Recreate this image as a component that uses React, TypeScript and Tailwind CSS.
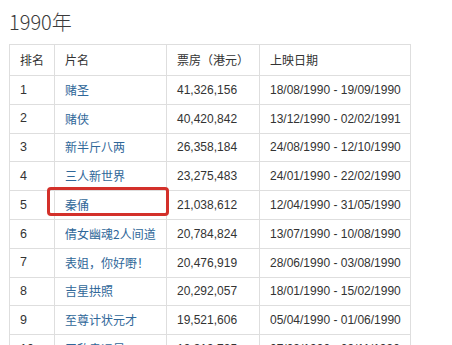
import React from "react";

const rows = [
  ["1", "赌圣", "41,326,156", "18/08/1990 - 19/09/1990"],
  ["2", "赌侠", "40,420,842", "13/12/1990 - 02/02/1991"],
  ["3", "新半斤八两", "26,358,184", "24/08/1990 - 12/10/1990"],
  ["4", "三人新世界", "23,275,483", "24/01/1990 - 22/02/1990"],
  ["5", "秦俑", "21,038,612", "12/04/1990 - 31/05/1990"],
  ["6", "倩女幽魂2人间道", "20,784,824", "13/07/1990 - 10/08/1990"],
  ["7", "表姐，你好嘢！", "20,476,919", "28/06/1990 - 03/08/1990"],
  ["8", "吉星拱照", "20,292,057", "18/01/1990 - 15/02/1990"],
  ["9", "至尊计状元才", "19,521,606", "05/04/1990 - 01/06/1990"],
  ["10", "无敌幸运星", "19,319,795", "07/09/1990 - 09/11/1990"],
];

const cjk = "font-['Noto_Sans_CJK_SC','Noto_Sans',sans-serif]";
const num = "font-['Liberation_Sans','Noto_Sans_CJK_SC',sans-serif]";

export default function App() {
  return (
    <div className="w-[452px] h-[345px] overflow-hidden bg-white relative">
      <div className={`pl-[9px] pt-[8px] h-[44px] text-[20px] leading-[28px] text-[#3a3a3a] font-light ${cjk}`}>
        1990年
      </div>
      <div className="ml-[9px] w-[402px] border border-[#dedede] text-[12px] text-[#333333] whitespace-nowrap">
        <div className="grid grid-cols-[45px_112px_93px_151px] h-[30px] items-stretch">
          <div className={`flex items-center pl-[10px] border-r border-[#dedede] ${cjk}`}>排名</div>
          <div className={`flex items-center pl-[10px] border-r border-[#dedede] ${cjk}`}>片名</div>
          <div className={`flex items-center pl-[10px] border-r border-[#dedede] ${cjk}`}>票房（港元）</div>
          <div className={`flex items-center pl-[10px] ${cjk}`}>上映日期</div>
        </div>
        {rows.map((r) => (
          <div key={r[0]} className="grid grid-cols-[45px_112px_93px_151px] h-[28.8px] border-t border-[#dedede] items-stretch">
            <div className={`flex items-center pl-[10px] border-r border-[#dedede] text-[12.5px] ${num}`}>{r[0]}</div>
            <div className={`flex items-center pl-[10px] border-r border-[#dedede] text-[#2f6799] ${cjk}`}>{r[1]}</div>
            <div className={`flex items-center pl-[10px] border-r border-[#dedede] ${num}`}>{r[2]}</div>
            <div className={`flex items-center pl-[10px] ${num}`}>{r[3]}</div>
          </div>
        ))}
      </div>
      <div className="absolute left-[47px] top-[187px] w-[122px] h-[29px] border-[3px] border-[#d3302a] rounded-[4px]" />
    </div>
  );
}
